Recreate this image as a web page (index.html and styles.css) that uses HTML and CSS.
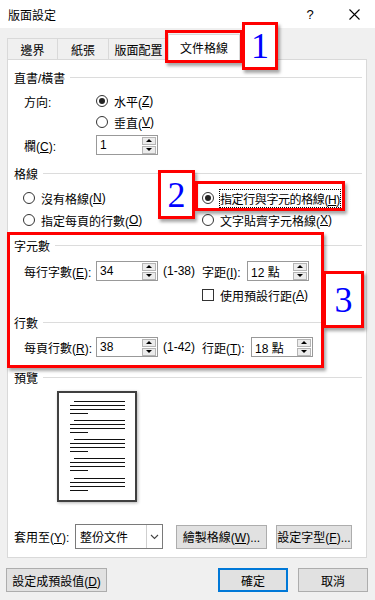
FILE: index.html
```html
<!DOCTYPE html>
<html lang="zh-Hant">
<head>
  <meta charset="UTF-8">
  <title>版面設定</title>
  <link rel="stylesheet" href="styles.css">
</head>
<body>
  <header class="titlebar">
    <span class="title">版面設定</span>
    <span class="help">?</span>
    <span class="close">
      <svg width="11" height="11" viewBox="0 0 11 11"><path d="M0.5 0.5L10.5 10.5M10.5 0.5L0.5 10.5" stroke="#000" stroke-width="1.1" fill="none"/></svg>
    </span>
  </header>

  <nav class="tabs">
    <div class="tab t-margin">邊界</div>
    <div class="tab t-paper">紙張</div>
    <div class="tab t-layout">版面配置</div>
    <div class="tab t-grid active">文件格線</div>
  </nav>

  <section class="panel">
    <div class="group-title"><span>直書/橫書</span></div>
    <div class="row r-dir">
      <span class="label">方向:</span>
      <span class="radio on"><i></i>水平(<u>Z</u>)</span>
    </div>
    <div class="row r-vert">
      <span class="radio"><i></i>垂直(<u>V</u>)</span>
    </div>
    <div class="row r-cols">
      <span class="label">欄(<u>C</u>):</span>
      <div class="spin"><span class="val">1</span><div class="arrows"><b class="up"></b><b class="down"></b></div></div>
    </div>

    <div class="group-title g-grid"><span>格線</span></div>
    <div class="opts o-first">
      <span class="radio"><i></i>沒有格線(<u>N</u>)</span>
      <span class="radio on"><i></i><em class="focus">指定行與字元的格線(<u>H</u>)</em></span>
    </div>
    <div class="opts o-second">
      <span class="radio"><i></i>指定每頁的行數(<u>O</u>)</span>
      <span class="radio"><i></i>文字貼齊字元格線(<u>X</u>)</span>
    </div>

    <div class="group-title g-chars"><span>字元數</span></div>
    <div class="row r-chars">
      <span class="label">每行字數(<u>E</u>):</span>
      <div class="spin"><span class="val">34</span><div class="arrows"><b class="up"></b><b class="down"></b></div></div>
      <span class="range">(1-38)</span>
      <span class="label2">字距(<u>I</u>):</span>
      <div class="spin"><span class="val">12 點</span><div class="arrows"><b class="up"></b><b class="down"></b></div></div>
    </div>
    <div class="row r-check">
      <span class="check"><i></i>使用預設行距(<u>A</u>)</span>
    </div>

    <div class="group-title g-lines"><span>行數</span></div>
    <div class="row r-lines">
      <span class="label">每頁行數(<u>R</u>):</span>
      <div class="spin"><span class="val">38</span><div class="arrows"><b class="up"></b><b class="down"></b></div></div>
      <span class="range">(1-42)</span>
      <span class="label2 wide">行距(<u>T</u>):</span>
      <div class="spin"><span class="val">18 點</span><div class="arrows"><b class="up"></b><b class="down"></b></div></div>
    </div>

    <div class="group-title g-preview"><span>預覽</span></div>
    <div class="preview">
      <svg width="76" height="107" viewBox="0 0 76 107">
        <g stroke="#111" stroke-width="1.2">
          <path d="M15 8.5H66M11 12.5H66M11 16.5H66M11 20.5H29"/>
          <path d="M15 27.5H66M11 31.5H66M11 35.5H66M11 39.5H29"/>
          <path d="M15 46.5H66M11 50.5H66M11 54.5H66M11 58.5H29"/>
          <path d="M15 65.5H66M11 69.5H66M11 73.5H66M11 77.5H29"/>
          <path d="M15 85.5H66M11 89.5H66M11 93.5H66M11 97.5H29"/>
        </g>
      </svg>
    </div>

    <div class="apply">
      <span class="apply-label">套用至(<u>Y</u>):</span>
      <div class="select">
        <span class="sel-val">整份文件</span>
        <span class="sel-btn">
          <svg width="9" height="6" viewBox="0 0 9 6"><path d="M1 1L4.5 4.5L8 1" stroke="#444" stroke-width="1.1" fill="none"/></svg>
        </span>
      </div>
      <button class="btn b-draw">繪製格線(<u>W</u>)...</button>
      <button class="btn b-font">設定字型(<u>F</u>)...</button>
    </div>
  </section>

  <footer class="footer">
    <button class="btn b-default">設定成預設值(<u>D</u>)</button>
    <button class="btn b-ok">確定</button>
    <button class="btn b-cancel">取消</button>
  </footer>

  <!-- annotation marks drawn over the dialog -->
  <div class="mark m-tab"></div>
  <div class="mark num n1">1</div>
  <div class="mark num n2">2</div>
  <div class="mark m-opt"></div>
  <div class="mark m-box"></div>
  <div class="mark num n3">3</div>
</body>
</html>
```

FILE: styles.css
```css
* { box-sizing: border-box; }
body {
  margin: 0;
  width: 375px;
  height: 600px;
  background: #f0f0f0;
  font-family: "Liberation Sans", "Noto Sans CJK TC", sans-serif;
  font-size: 12px;
  color: #000;
  position: relative;
  overflow: hidden;
}
u { text-decoration: underline; text-underline-offset: 1px; }
em { font-style: normal; }

.titlebar {
  height: 28px;
  background: #fff;
  display: flex;
  align-items: center;
  padding-left: 8px;
}
.title { flex: 1; }
.help { width: 46px; text-align: center; font-size: 13px; }
.close { width: 42px; display: flex; justify-content: center; }

.tabs {
  height: 31px;
  display: flex;
  align-items: flex-end;
  padding-left: 7px;
}
.tab {
  height: 21px;
  border: 1px solid #d9d9d9;
  border-bottom: none;
  margin-right: -1px;
  display: flex;
  align-items: center;
  justify-content: center;
  background: #f0f0f0;
}
.t-margin { width: 51px; }
.t-paper { width: 52px; }
.t-layout { width: 61px; }
.t-grid { width: 72px; }
.tab.active {
  height: 26px;
  margin-bottom: -1px;
  background: #fff;
  position: relative;
  z-index: 1;
}

.panel {
  margin-left: 7px;
  width: 360px;
  height: 499px;
  background: #fff;
  border: 1px solid #d9d9d9;
  padding: 9px 4px 0 6px;
}
.group-title {
  height: 16px;
  display: flex;
  align-items: center;
  gap: 5px;
}
.group-title::after {
  content: "";
  flex: 1;
  height: 1px;
  background: #dcdcdc;
}
.g-grid { margin-top: 9px; }
.g-chars { margin-top: 7px; }
.g-lines { margin-top: 9px; }
.g-preview { margin-top: 11px; }

.row {
  display: flex;
  align-items: center;
  padding-left: 10px;
}
.r-dir { margin-top: 6px; height: 20px; }
.r-vert { margin-top: 1px; height: 20px; padding-left: 82px; }
.r-cols { margin-top: 2px; height: 22px; }
.r-chars { margin-top: 7px; height: 22px; }
.r-check { margin-top: 3px; height: 20px; padding-left: 188px; }
.r-lines { margin-top: 6px; height: 22px; }
.label { width: 72px; }
.range { width: 44px; padding-left: 5px; }
.label2 { width: 45px; }
.label2.wide { width: 49px; }

.radio, .check {
  display: flex;
  align-items: center;
}
.radio i {
  width: 12px;
  height: 12px;
  border: 1px solid #333;
  border-radius: 50%;
  margin-right: 6px;
  display: flex;
  align-items: center;
  justify-content: center;
}
.radio.on i::after {
  content: "";
  width: 6px;
  height: 6px;
  border-radius: 50%;
  background: #222;
}
.check i {
  width: 12px;
  height: 12px;
  border: 1px solid #333;
  margin-right: 6px;
}
.focus {
  outline: 1px dotted #000;
  letter-spacing: -0.4px;
}

.opts {
  display: flex;
  height: 20px;
  align-items: center;
  padding-left: 9px;
}
.o-first { margin-top: 7px; }
.o-second { margin-top: 2px; }
.opts .radio:first-child { width: 179px; }

.spin {
  width: 62px;
  height: 20px;
  border: 1px solid #999;
  display: flex;
  align-items: center;
  justify-content: space-between;
  padding-left: 3px;
  background: #fff;
}
.arrows {
  display: flex;
  flex-direction: column;
  gap: 1px;
  margin-right: 1px;
}
.arrows b {
  width: 14px;
  height: 8px;
  border: 1px solid #b5b5b5;
  background: #ececec;
  display: flex;
  align-items: center;
  justify-content: center;
}
.arrows .up::after {
  content: "";
  border-left: 3px solid transparent;
  border-right: 3px solid transparent;
  border-bottom: 3px solid #000;
}
.arrows .down::after {
  content: "";
  border-left: 3px solid transparent;
  border-right: 3px solid transparent;
  border-top: 3px solid #000;
}

.preview {
  margin: 6px 0 0 43px;
  width: 80px;
  height: 111px;
  border: 2px solid #404040;
  box-shadow: 1px 1px 3px rgba(0,0,0,0.3);
  background: #fff;
}
.preview svg { display: block; }

.apply {
  margin-top: 22px;
  height: 25px;
  display: flex;
  align-items: center;
}
.apply-label { width: 61px; }
.select {
  width: 88px;
  height: 25px;
  border: 1px solid #7a7a7a;
  display: flex;
  align-items: stretch;
}
.sel-val {
  flex: 1;
  display: flex;
  align-items: center;
  padding-left: 4px;
}
.sel-btn {
  width: 16px;
  border-left: 1px solid #cfcfcf;
  display: flex;
  align-items: center;
  justify-content: center;
}

.btn {
  height: 24px;
  padding: 0;
  font-family: inherit;
  font-size: 12px;
  color: #000;
  background: #e1e1e1;
  border: 1px solid #adadad;
}
.b-draw { width: 91px; margin-left: 13px; }
.b-font { width: 76px; margin-left: 9px; }

.footer {
  margin-top: 10px;
  height: 24px;
  display: flex;
  padding: 0 7px 0 6px;
}
.b-default { width: 101px; margin-right: auto; }
.b-ok {
  width: 70px;
  border-color: #0078d7;
  box-shadow: inset 0 0 0 1px #0078d7;
}
.b-cancel { width: 70px; margin-left: 10px; }

.mark {
  position: absolute;
  border: 3px solid #f00;
  box-shadow: 2px 3px 3px rgba(0,0,0,0.35);
  z-index: 5;
}
.num {
  background: #fff;
  color: #0000ff;
  font-family: "Liberation Serif", serif;
  font-size: 36px;
  line-height: 1;
  display: flex;
  align-items: center;
  justify-content: center;
}
.m-tab { left: 165px; top: 30px; width: 78px; height: 33px; }
.n1 { left: 242px; top: 22px; width: 36px; height: 48px; }
.n2 { left: 158px; top: 170px; width: 37px; height: 49px; }
.m-opt { left: 195px; top: 181px; width: 150px; height: 30px; }
.m-box { left: 7px; top: 232px; width: 317px; height: 136px; }
.n3 { left: 323px; top: 271px; width: 41px; height: 57px; }
```
